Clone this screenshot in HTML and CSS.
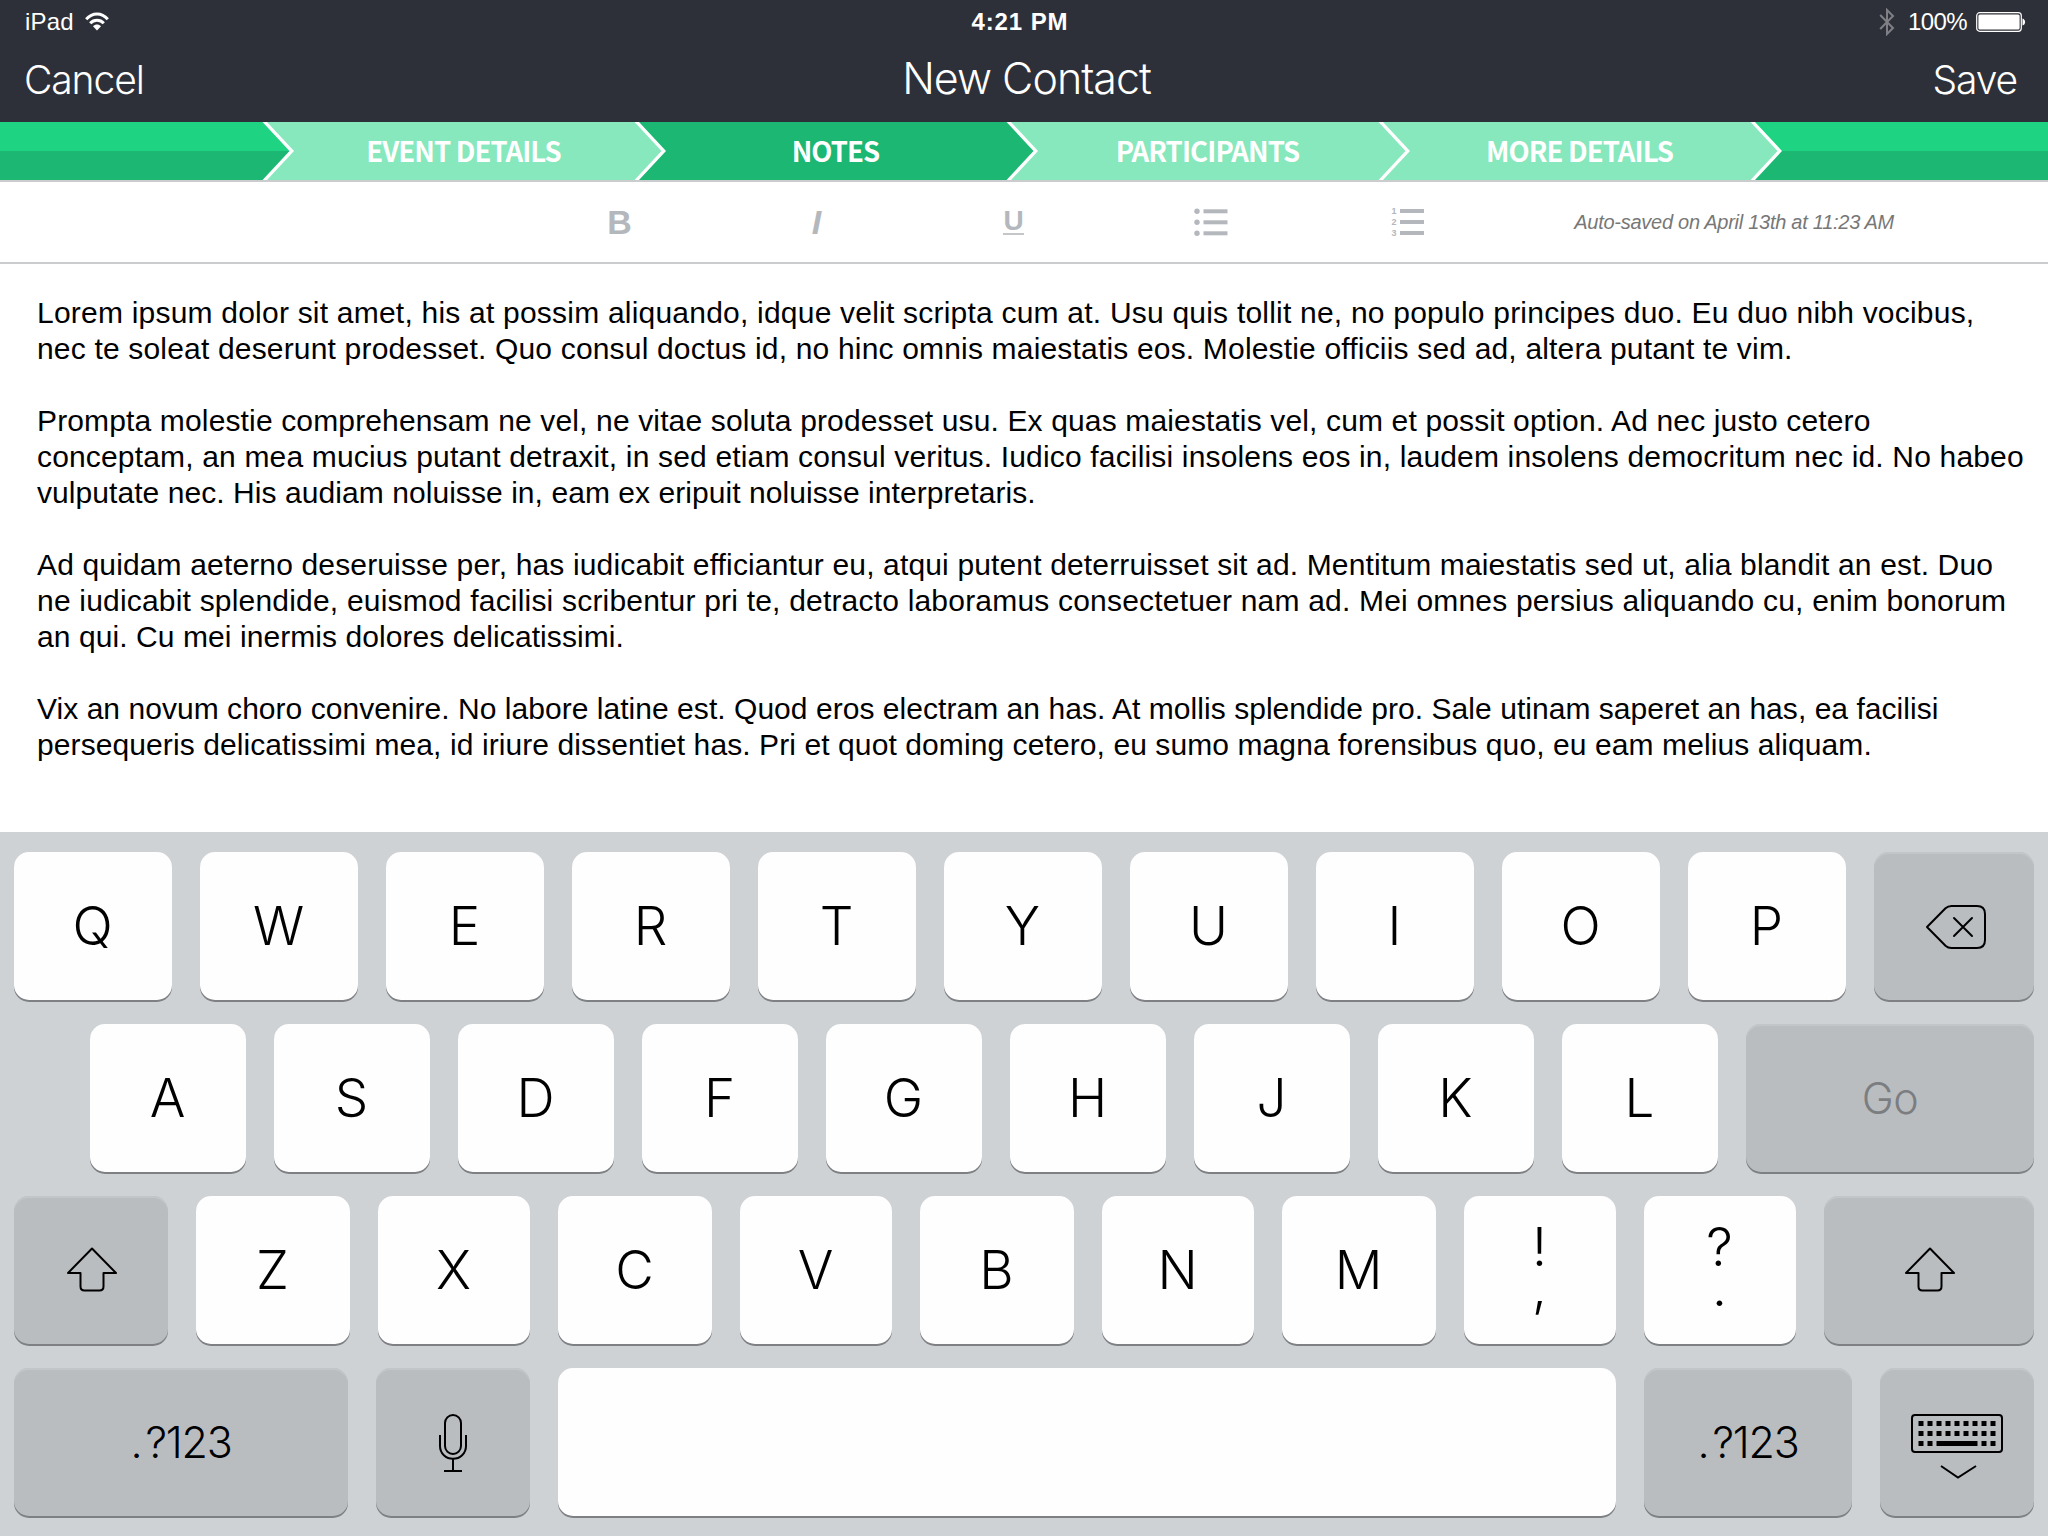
FILE: index.html
```html
<!DOCTYPE html>
<html lang="en">
<head>
<meta charset="utf-8">
<title>New Contact</title>
<link rel="stylesheet" href="styles.css">
</head>
<body>
<div class="app">
  <header class="header">
    <div class="status">
      <div class="status-left">
        <span class="device">iPad</span>
        <svg class="wifi" width="24" height="19" viewBox="0 0 24 19" fill="none" stroke="#fff" stroke-width="3">
          <path d="M1.2 7.2C7.5 .3 16.500 .3 22.800 7.200"/>
          <path d="M5.200 11.300C9 7.300 15 7.300 18.800 11.300"/>
          <path d="M12 18.500L8 14.300C10.200 12 13.800 12 16 14.300Z" fill="#fff" stroke="none"/>
        </svg>
      </div>
      <span class="clock">4:21 PM</span>
      <div class="status-right">
        <svg class="bluetooth" width="16" height="28" viewBox="0 0 16 28" fill="none" stroke="#7f8085" stroke-width="2">
          <path d="M1.200 7L14 20L8 26V2L14 8L1.200 21"/>
        </svg>
        <span class="percent">100%</span>
        <svg class="battery" width="50" height="20" viewBox="0 0 50 20">
          <rect x=".7" y=".7" width="44.600" height="18.600" rx="3" fill="none" stroke="#fff" stroke-width="1.200"/>
          <rect x="2.400" y="2.400" width="41.200" height="15.200" rx="1.500" fill="#fff"/>
          <path d="M46.500 6.500C50 7.500 50 12.500 46.500 13.500Z" fill="#fff"/>
        </svg>
      </div>
    </div>
    <nav class="nav">
      <span class="nav-cancel">Cancel</span>
      <h1 class="nav-title">New Contact</h1>
      <span class="nav-save">Save</span>
    </nav>
  </header>

  <ol class="steps">
    <li class="step step-start"></li>
    <li class="step step-light">
      <svg class="chevron" width="34" height="58" viewBox="0 0 34 58"><path d="M0 0H2L30 29H0Z" fill="#1ed382"/><path d="M0 29H30L2 58H0Z" fill="#1bb773"/><path d="M.5 0H5L32 29L5 58H.5L27.500 29Z" fill="#fff"/></svg>
      <span>EVENT DETAILS</span>
    </li>
    <li class="step step-active">
      <svg class="chevron" width="34" height="58" viewBox="0 0 34 58"><path d="M0 0H2L30 29L2 58H0Z" fill="#86e8bc"/><path d="M.5 0H5L32 29L5 58H.5L27.500 29Z" fill="#fff"/></svg>
      <span>NOTES</span>
    </li>
    <li class="step step-light">
      <svg class="chevron" width="34" height="58" viewBox="0 0 34 58"><path d="M0 0H2L30 29L2 58H0Z" fill="#1bb773"/><path d="M.5 0H5L32 29L5 58H.5L27.500 29Z" fill="#fff"/></svg>
      <span>PARTICIPANTS</span>
    </li>
    <li class="step step-light">
      <svg class="chevron" width="34" height="58" viewBox="0 0 34 58"><path d="M.5 0H5L32 29L5 58H.5L27.500 29Z" fill="#fff"/></svg>
      <span>MORE DETAILS</span>
    </li>
    <li class="step step-end">
      <svg class="chevron" width="34" height="58" viewBox="0 0 34 58"><path d="M0 0H2L30 29L2 58H0Z" fill="#86e8bc"/><path d="M.5 0H5L32 29L5 58H.5L27.500 29Z" fill="#fff"/></svg>
    </li>
  </ol>

  <div class="toolbar">
    <div class="tools">
      <span class="tool tool-bold">B</span>
      <span class="tool tool-italic">I</span>
      <span class="tool tool-underline"><span class="u-glyph">U</span></span>
      <span class="tool">
        <svg width="34" height="28" viewBox="0 0 34 28" fill="#b4b7bc">
          <circle cx="3" cy="3.300" r="2.700"/><circle cx="3" cy="14.300" r="2.700"/><circle cx="3" cy="25.300" r="2.700"/>
          <rect x="9.500" y="1.300" width="24" height="4"/><rect x="9.500" y="12.300" width="24" height="4"/><rect x="9.500" y="23.300" width="24" height="4"/>
        </svg>
      </span>
      <span class="tool">
        <span class="numbers"><span>1</span><span>2</span><span>3</span></span>
        <svg width="24" height="28" viewBox="0 0 24 28" fill="#b4b7bc">
          <rect y="1" width="24" height="4"/><rect y="12" width="24" height="4"/><rect y="23" width="24" height="4"/>
        </svg>
      </span>
    </div>
    <span class="autosave">Auto-saved on April 13th at 11:23 AM</span>
  </div>

  <main class="notes">
    <p class="para-1">
      <span class="line">Lorem ipsum dolor sit amet, his at possim aliquando, idque velit scripta cum at. Usu quis tollit ne, no populo principes duo. Eu duo nibh vocibus,</span>
      <span class="line">nec te soleat deserunt prodesset. Quo consul doctus id, no hinc omnis maiestatis eos. Molestie officiis sed ad, altera putant te vim.</span>
    </p>
    <p class="para-2">
      <span class="line">Prompta molestie comprehensam ne vel, ne vitae soluta prodesset usu. Ex quas maiestatis vel, cum et possit option. Ad nec justo cetero</span>
      <span class="line">conceptam, an mea mucius putant detraxit, in sed etiam consul veritus. Iudico facilisi insolens eos in, laudem insolens democritum nec id. No habeo</span>
      <span class="line">vulputate nec. His audiam noluisse in, eam ex eripuit noluisse interpretaris.</span>
    </p>
    <p class="para-3">
      <span class="line">Ad quidam aeterno deseruisse per, has iudicabit efficiantur eu, atqui putent deterruisset sit ad. Mentitum maiestatis sed ut, alia blandit an est. Duo</span>
      <span class="line">ne iudicabit splendide, euismod facilisi scribentur pri te, detracto laboramus consectetuer nam ad. Mei omnes persius aliquando cu, enim bonorum</span>
      <span class="line">an qui. Cu mei inermis dolores delicatissimi.</span>
    </p>
    <p class="para-4">
      <span class="line">Vix an novum choro convenire. No labore latine est. Quod eros electram an has. At mollis splendide pro. Sale utinam saperet an has, ea facilisi</span>
      <span class="line">persequeris delicatissimi mea, id iriure dissentiet has. Pri et quot doming cetero, eu sumo magna forensibus quo, eu eam melius aliquam.</span>
    </p>
  </main>

  <section class="keyboard">
    <div class="row row-1">
      <div class="key">Q</div><div class="key">W</div><div class="key">E</div><div class="key">R</div><div class="key">T</div><div class="key">Y</div><div class="key">U</div><div class="key">I</div><div class="key">O</div><div class="key">P</div>
      <div class="key key-dark">
        <svg class="delete-icon" width="62" height="46" viewBox="0 0 62 46" fill="none" stroke="#000" stroke-width="2" stroke-linejoin="round" stroke-linecap="round">
          <path d="M2 23L20.500 4.300Q23 2 26.500 2H52Q60 2 60 10V36Q60 44 52 44H26.500Q23 44 20.500 41.700Z"/>
          <path d="M29 14L47 32M47 14L29 32"/>
        </svg>
      </div>
    </div>
    <div class="row row-2">
      <div class="key">A</div><div class="key">S</div><div class="key">D</div><div class="key">F</div><div class="key">G</div><div class="key">H</div><div class="key">J</div><div class="key">K</div><div class="key">L</div>
      <div class="key key-dark key-word key-go">Go</div>
    </div>
    <div class="row row-3">
      <div class="key key-dark">
        <svg class="shift-icon" width="52" height="46" viewBox="0 0 52 46" fill="none" stroke="#000" stroke-width="2" stroke-linejoin="round">
          <path d="M26 1.500L50 26H37.500V39.500Q37.500 43.500 33.500 43.500H18.500Q14.500 43.500 14.500 39.500V26H2Z"/>
        </svg>
      </div>
      <div class="key">Z</div><div class="key">X</div><div class="key">C</div><div class="key">V</div><div class="key">B</div><div class="key">N</div><div class="key">M</div>
      <div class="key key-pair"><span>!</span><span>,</span></div>
      <div class="key key-pair"><span>?</span><span>.</span></div>
      <div class="key key-dark">
        <svg class="shift-icon" width="52" height="46" viewBox="0 0 52 46" fill="none" stroke="#000" stroke-width="2" stroke-linejoin="round">
          <path d="M26 1.500L50 26H37.500V39.500Q37.500 43.500 33.500 43.500H18.500Q14.500 43.500 14.500 39.500V26H2Z"/>
        </svg>
      </div>
    </div>
    <div class="row row-4">
      <div class="key key-dark key-word"><span class="dot">.</span>?123</div>
      <div class="key key-dark">
        <svg class="mic-icon" width="30" height="60" viewBox="0 0 30 60" fill="none" stroke="#000" stroke-width="2">
          <rect x="7" y="2" width="16" height="39" rx="8"/>
          <path d="M2 22V33C2 40.500 8 45.800 15 45.800S28 40.500 28 33V22M15 46V58M6 58H24"/>
        </svg>
      </div>
      <div class="key"></div>
      <div class="key key-dark key-word"><span class="dot">.</span>?123</div>
      <div class="key key-dark">
        <svg class="hide-icon" width="92" height="66" viewBox="0 0 92 66" fill="none" stroke="#000" stroke-width="2">
          <rect x="1" y="1" width="90" height="37" rx="3"/>
          <path d="M7.500 9.500H84.500" stroke-width="5" stroke-dasharray="5 4"/>
          <path d="M7.500 19.500H84.500" stroke-width="5" stroke-dasharray="5 4"/>
          <path d="M7.500 29.500H21.500M70.500 29.500H84.500" stroke-width="5" stroke-dasharray="5 4"/>
          <path d="M25.500 29.500H66.500" stroke-width="5"/>
          <path d="M30 52L47 63.500L65 52"/>
        </svg>
      </div>
    </div>
  </section>
</div>
</body>
</html>
```
FILE: styles.css
```css
* { box-sizing: border-box; }

body {
  margin: 0;
  background: #fff;
  font-family: "Liberation Sans", Arial, sans-serif;
}

.app {
  width: 2048px;
  height: 1536px;
  display: flex;
  flex-direction: column;
  overflow: hidden;
}

/* Header */
.header {
  height: 122px;
  background: #2e3039;
  color: #fff;
}

.status {
  height: 43px;
  padding: 0 22px 0 25px;
  display: grid;
  grid-template-columns: 1fr auto 1fr;
  align-items: center;
  font-size: 24px;
  line-height: 43px;
}

.status-left,
.status-right {
  display: flex;
  align-items: center;
}

.status-left { gap: 11px; }
.status-right { justify-content: flex-end; }
.device { letter-spacing: 0.2px; }

.clock {
  margin-right: 11px;
  font-weight: bold;
  letter-spacing: 0.9px;
}

.percent { margin: 0 9px 0 13px; letter-spacing: -0.6px; }

.nav {
  height: 79px;
  padding: 0 31px 0 24px;
  display: grid;
  grid-template-columns: 1fr auto 1fr;
  align-items: baseline;
  font-family: Inter, "Liberation Sans", sans-serif;
  font-weight: 300;
  font-size: 39px;
  line-height: 71px;
}

.nav-title {
  margin: 0 0 0 12px;
  font-size: 43px;
  font-weight: 300;
  letter-spacing: -1px;
}

.nav-cancel { letter-spacing: -1.1px; }
.nav-save { text-align: right; letter-spacing: -1.1px; }

/* Progress steps */
.steps {
  height: 60px;
  margin: 0;
  padding: 0;
  display: flex;
  list-style: none;
  border-bottom: 2px solid #cbcccd;
}

.step {
  position: relative;
  width: 372px;
  padding-left: 31px;
  display: flex;
  align-items: center;
  justify-content: center;
  color: #fff;
  font-family: "Noto Sans CJK SC", "Noto Sans", sans-serif;
  font-size: 27.500px;
  font-weight: bold;
  letter-spacing: -0.900px;
  line-height: 56px;
  white-space: nowrap;
}

.step span { padding-bottom: 2px; }

.chevron {
  position: absolute;
  left: 0;
  top: 0;
}

.step-start,
.step-end { background: linear-gradient(#1ed382 50%, #1bb773 50%); }
.step-start { width: 262px; }
.step-end { flex: 1; }
.step-light { background: #86e8bc; }
.step-active { background: #1bb773; }

/* Formatting toolbar */
.toolbar {
  height: 82px;
  padding: 0 154px 0 521px;
  display: flex;
  align-items: center;
  justify-content: space-between;
  border-bottom: 2px solid #cbcccd;
}

.tools {
  display: grid;
  grid-template-columns: repeat(5, 197px);
}

.tool {
  height: 40px;
  display: flex;
  align-items: center;
  justify-content: center;
  color: #b4b7bc;
  font-size: 34px;
  line-height: 40px;
}

.tool-bold { font-weight: bold; }
.tool-italic { font-weight: bold; font-style: italic; }

.u-glyph {
  height: 26px;
  border-bottom: 2px solid #c4c6ca;
  font-size: 28px;
  font-weight: bold;
  line-height: 23px;
}

.numbers {
  width: 8px;
  display: flex;
  flex-direction: column;
  font-size: 9px;
  font-weight: bold;
  line-height: 11px;
}

.autosave {
  color: #777;
  font-size: 20px;
  font-style: italic;
  letter-spacing: -0.270px;
}

/* Notes body */
.notes {
  flex: 1;
  padding: 31px 0 0 37px;
  color: #000;
  font-size: 30px;
  line-height: 36px;
  white-space: nowrap;
}

.notes p { margin: 0 0 36px; }
.line { display: block; }

.para-1 .line:nth-child(1) { letter-spacing: 0.215px; }
.para-1 .line:nth-child(2) { letter-spacing: 0.177px; }
.para-2 .line:nth-child(1) { letter-spacing: 0.144px; }
.para-2 .line:nth-child(2) { letter-spacing: 0.164px; }
.para-2 .line:nth-child(3) { letter-spacing: 0.063px; }
.para-3 .line:nth-child(1) { letter-spacing: 0.148px; }
.para-3 .line:nth-child(2) { letter-spacing: 0.196px; }
.para-3 .line:nth-child(3) { letter-spacing: 0.075px; }
.para-4 .line:nth-child(1) { letter-spacing: 0.042px; }
.para-4 .line:nth-child(2) { letter-spacing: 0.090px; }

/* Keyboard */
.keyboard {
  height: 704px;
  padding: 20px 14px;
  display: flex;
  flex-direction: column;
  gap: 24px;
  background: #ced2d5;
}

.row {
  height: 148px;
  display: grid;
  column-gap: 28px;
}

.row-1 { grid-template-columns: repeat(10, 158px) 160px; }
.row-2 { grid-template-columns: repeat(9, 156px) 288px; padding-left: 76px; }
.row-3 { grid-template-columns: 154px 154px 152px 154px 152px 154px 152px 154px 152px 152px 210px; }
.row-4 { grid-template-columns: 334px 154px 1058px 208px 154px; }

.key {
  padding-right: 1px;
  display: flex;
  align-items: center;
  justify-content: center;
  border-radius: 15px;
  background: #fefefe;
  box-shadow: 0 2px 0 #7e8084;
  color: #000;
  font-family: Inter, "Liberation Sans", sans-serif;
  font-size: 53px;
  font-weight: 300;
  line-height: 1;
}

.key-dark {
  padding-right: 0;
  background: #babdc0;
  box-shadow: 0 2px 0 #7e8084, inset 0 2px 0 #c2c6c9;
}

.key-word { font-size: 43px; letter-spacing: -1.200px; }
.key-go { letter-spacing: -0.500px; color: #7c7d81; }
.dot { margin-right: 4px; }

.key-pair {
  flex-direction: column;
  justify-content: flex-start;
  padding-top: 31px;
  line-height: 40px;
}

.delete-icon { margin: 2px 0 0 4px; }
.shift-icon { margin-left: 2px; }
.mic-icon { margin-top: 1px; }
.hide-icon { margin-top: 9px; }
```
